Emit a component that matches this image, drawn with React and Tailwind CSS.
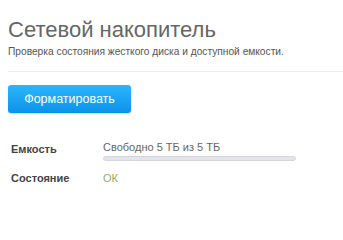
export default function App() {
  return (
    <div
      className="w-[343px] h-[200px] bg-white overflow-hidden pl-2 pt-[17px]"
      style={{ fontFamily: '"Liberation Sans", Arial, sans-serif' }}
    >
      {/* Header */}
      <h1 className="text-[22px] leading-[26px] text-[#666] font-normal">
        Сетевой накопитель
      </h1>
      <p className="text-[10.2px] leading-[13px] text-[#555] mt-[2px]">
        Проверка состояния жесткого диска и доступной емкости.
      </p>

      <div className="h-px bg-[#ececec] mt-[13px]" />

      {/* Action */}
      <button className="mt-[13px] w-[123px] h-[28px] rounded-[3px] bg-gradient-to-b from-[#2ab6fb] to-[#0b92ea] text-white text-[12.5px] leading-[28px] shadow-[0_1px_1px_rgba(0,0,0,0.15)]">
        Форматировать
      </button>

      {/* Details */}
      <div className="mt-[28px] flex flex-col gap-[10px]">
        <div className="flex items-start">
          <span className="w-[95px] pl-[3px] mt-px text-[11px] leading-[14px] font-bold text-[#444]">
            Емкость
          </span>
          <div className="flex flex-col">
            <span className="text-[11px] leading-[13px] text-[#666]">
              Свободно 5 ТБ из 5 ТБ
            </span>
            <div className="mt-[2px] w-[193px] h-[5px] rounded-full bg-[#e3e4e9] border border-[#d4d6dc]" />
          </div>
        </div>
        <div className="flex items-baseline">
          <span className="w-[95px] pl-[3px] text-[11px] leading-[14px] font-bold text-[#444]">
            Состояние
          </span>
          <span className="text-[11px] leading-[14px] text-[#8db25a]">ОК</span>
        </div>
      </div>
    </div>
  )
}
